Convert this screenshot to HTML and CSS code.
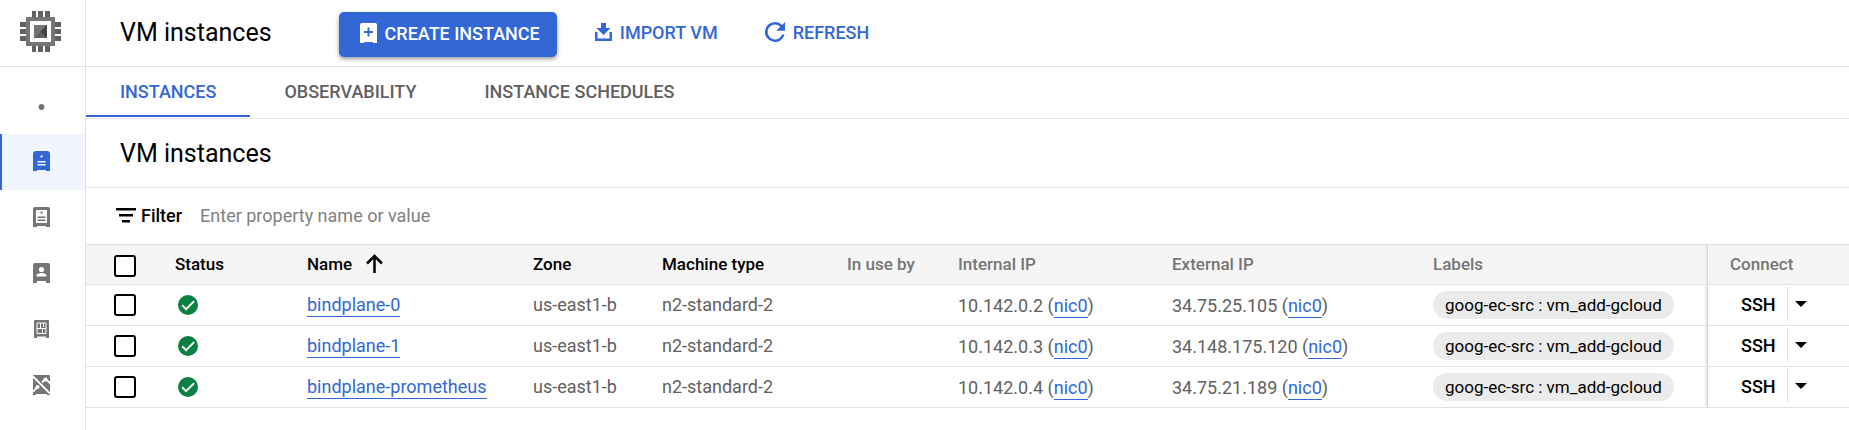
FILE: index.html
```html
<!DOCTYPE html>
<html lang="en">
<head>
    <meta charset="UTF-8">
    <meta name="viewport" content="width=device-width, initial-scale=1.0">
    <title>VM instances</title>
    <link rel="stylesheet" href="styles.css">
</head>
<body>

    <!-- Shared icons -->
    <svg class="sprite" aria-hidden="true">
        <symbol id="icon-check" viewBox="0 0 20 20">
            <circle cx="10" cy="10" r="10" fill="#0b8043"/>
            <path d="M4.2 10.2l3.900 3.900 8-8" fill="none" stroke="#fff" stroke-width="2"/>
        </symbol>
        <symbol id="icon-caret" viewBox="0 0 12 6">
            <path d="M0 0h12L6 6z" fill="#000"/>
        </symbol>
    </svg>

    <div class="layout">
        <!-- Side navigation -->
        <nav class="sidebar" aria-label="Compute Engine">
            <a href="#" class="logo" aria-label="Compute Engine">
                <svg width="41" height="41" viewBox="0 0 41 41">
                    <path fill="#616161" d="M12 0h4v6h-4zM18 0h5v6h-5zM25 0h5v6h-5zM12 35h4v6h-4zM18 35h5v6h-5zM25 35h5v6h-5zM0 11h6v5H0zM0 18h6v5H0zM0 25h6v5H0zM35 11h6v5h-6zM35 18h6v5h-6zM35 25h6v5h-6z"/>
                    <path fill="#757575" fill-rule="evenodd" d="M6 6h29v29H6zM10 10v21h21V10z"/>
                    <path fill="#757575" d="M14 14h13v13H14z"/>
                    <path fill="#616161" d="M14 27l13-13v13z"/>
                    <path fill="#424242" d="M27 14v13l-6.500-6.500z"/>
                </svg>
            </a>
            <div class="nav-list">
                <span class="nav-item">
                    <svg width="17" height="20" viewBox="0 0 17 20"><circle cx="8.500" cy="12" r="2.900" fill="#757575"/></svg>
                </span>
                <a href="#" class="nav-item active" aria-label="VM instances">
                    <svg width="17" height="20" viewBox="0 0 17 20">
                        <path fill="currentColor" d="M3 0h11q3 0 3 3v17h-4v-1H4v1H0V3q0-3 3-3z"/>
                        <path fill="#f0f5fe" d="M7.500 4.500h2v2h-2zM4.500 10h8v1.500h-8zM4.500 13h8v1.500h-8z"/>
                    </svg>
                </a>
                <a href="#" class="nav-item" aria-label="Instance templates">
                    <svg width="17" height="20" viewBox="0 0 17 20">
                        <path fill="currentColor" fill-rule="evenodd" d="M2 0h13q2 0 2 2v18h-4v-1H4v1H0V2q0-2 2-2zM3 3v13h11V3z"/>
                        <path fill="currentColor" d="M7.500 4.500h2v2h-2zM4.500 9.500h8V11h-8zM4.500 12.500h8V14h-8z"/>
                    </svg>
                </a>
                <a href="#" class="nav-item" aria-label="Sole-tenant nodes">
                    <svg width="17" height="20" viewBox="0 0 17 20">
                        <path fill="currentColor" d="M2 0h13q2 0 2 2v18h-4v-2H4v2H0V2q0-2 2-2z"/>
                        <circle cx="8.500" cy="6.500" r="2.600" fill="#fff"/>
                        <path fill="#fff" d="M3.500 13.500v-1c0-1.500 3-2.500 5-2.500s5 1 5 2.500v1z"/>
                    </svg>
                </a>
                <a href="#" class="nav-item" aria-label="Machine images">
                    <svg width="15" height="18" viewBox="0 0 15 18">
                        <path fill="currentColor" d="M1 0h13q1 0 1 1v17h-3v-1.500H3V18H0V1q0-1 1-1z"/>
                        <path fill="none" stroke="#fff" d="M3 3h9v10.500H3zM6.500 3v5.500M3 8.500h9M8.500 8.500v5M9.500 3v4"/>
                    </svg>
                </a>
                <a href="#" class="nav-item" aria-label="TPUs">
                    <svg width="17" height="20" viewBox="0 0 17 20">
                        <path fill="currentColor" d="M1 0h15q1 0 1 1v19h-3v-1H3v1H0V1q0-1 1-1z"/>
                        <path fill="none" stroke="#fff" stroke-width="1.800" d="M0 1.500l17 17M0 16.500l4.500-4.500M12.500 4L9 7.500M12.500 4l5 4.500"/>
                        <circle cx="4.500" cy="12" r="2" fill="#fff"/>
                        <circle cx="12.500" cy="4.500" r="2" fill="#fff"/>
                    </svg>
                </a>
            </div>
        </nav>

        <main class="content">
            <!-- Page header -->
            <header class="toolbar">
                <h1>VM instances</h1>
                <button type="button" class="btn primary">
                    <svg width="17" height="20" viewBox="0 0 17 20">
                        <path fill="#fff" d="M2 0h13q2 0 2 2v18h-4v-1H4v1H0V2q0-2 2-2z"/>
                        <path fill="#3367d6" d="M7.500 4.500h2v3.500H13v2H9.500v3.500h-2V10H4V8h3.500z"/>
                    </svg>
                    CREATE INSTANCE
                </button>
                <button type="button" class="btn">
                    <svg width="17" height="20" viewBox="0 0 17 20">
                        <path fill="currentColor" d="M6 1h5v5h4.500L8.500 13l-7-7H6zM0 10h2.500v6.500h12V10H17v9H0z"/>
                    </svg>
                    IMPORT VM
                </button>
                <button type="button" class="btn">
                    <svg width="20" height="20" viewBox="0 0 20 20">
                        <path fill="currentColor" d="M17.100 2.900L20 0v8.700h-8.700l3.900-3.900A7.300 7.300 0 0 0 10 2.600a7.400 7.400 0 1 0 7 9.900h2.600A10 10 0 1 1 10 0c2.800 0 5.200 1.100 7.100 2.900z"/>
                    </svg>
                    REFRESH
                </button>
            </header>

            <!-- Tabs -->
            <nav class="tabs">
                <a href="#" class="tab selected">INSTANCES</a>
                <a href="#" class="tab">OBSERVABILITY</a>
                <a href="#" class="tab">INSTANCE SCHEDULES</a>
            </nav>

            <h2>VM instances</h2>

            <!-- Filter -->
            <div class="filter">
                <svg width="20" height="15" viewBox="0 0 20 15">
                    <path fill="#000" d="M0 0h20v2.500H0zM3 6h14v2.500H3zM6 12h8v2.500H6z"/>
                </svg>
                <label for="filter">Filter</label>
                <input type="text" id="filter" placeholder="Enter property name or value">
            </div>

            <!-- Instances -->
            <table class="instances">
                <colgroup>
                    <col class="col-check">
                    <col class="col-status">
                    <col class="col-name">
                    <col class="col-zone">
                    <col class="col-machine">
                    <col class="col-use">
                    <col class="col-internal">
                    <col class="col-external">
                    <col class="col-labels">
                    <col class="col-connect">
                </colgroup>
                <thead>
                    <tr>
                        <th class="check"><input type="checkbox" aria-label="Select all"></th>
                        <th class="sortable">Status</th>
                        <th class="sortable">
                            <span class="sorted">Name
                                <svg width="17" height="19" viewBox="0 0 17 19">
                                    <path d="M8.500 19V2M1 9.500L8.500 2 16 9.500" fill="none" stroke="#000" stroke-width="2.500"/>
                                </svg>
                            </span>
                        </th>
                        <th class="sortable">Zone</th>
                        <th class="sortable">Machine type</th>
                        <th>In use by</th>
                        <th>Internal IP</th>
                        <th>External IP</th>
                        <th>Labels</th>
                        <th class="connect">Connect</th>
                    </tr>
                </thead>
                <tbody>
                    <tr>
                        <td class="check"><input type="checkbox" aria-label="Select bindplane-0"></td>
                        <td class="status"><svg width="20" height="20" role="img" aria-label="Running"><use href="#icon-check"/></svg></td>
                        <td><a href="#">bindplane-0</a></td>
                        <td>us-east1-b</td>
                        <td>n2-standard-2</td>
                        <td></td>
                        <td class="ip">10.142.0.2 (<a href="#">nic0</a>)</td>
                        <td class="ip">34.75.25.105 (<a href="#">nic0</a>)</td>
                        <td class="labels"><span class="chip">goog-ec-src : vm_add-gcloud</span></td>
                        <td class="connect">
                            <div class="ssh">
                                <button type="button">SSH</button>
                                <button type="button" class="more" aria-label="More SSH options"><svg width="12" height="6"><use href="#icon-caret"/></svg></button>
                            </div>
                        </td>
                    </tr>
                    <tr>
                        <td class="check"><input type="checkbox" aria-label="Select bindplane-1"></td>
                        <td class="status"><svg width="20" height="20" role="img" aria-label="Running"><use href="#icon-check"/></svg></td>
                        <td><a href="#">bindplane-1</a></td>
                        <td>us-east1-b</td>
                        <td>n2-standard-2</td>
                        <td></td>
                        <td class="ip">10.142.0.3 (<a href="#">nic0</a>)</td>
                        <td class="ip">34.148.175.120 (<a href="#">nic0</a>)</td>
                        <td class="labels"><span class="chip">goog-ec-src : vm_add-gcloud</span></td>
                        <td class="connect">
                            <div class="ssh">
                                <button type="button">SSH</button>
                                <button type="button" class="more" aria-label="More SSH options"><svg width="12" height="6"><use href="#icon-caret"/></svg></button>
                            </div>
                        </td>
                    </tr>
                    <tr>
                        <td class="check"><input type="checkbox" aria-label="Select bindplane-prometheus"></td>
                        <td class="status"><svg width="20" height="20" role="img" aria-label="Running"><use href="#icon-check"/></svg></td>
                        <td><a href="#">bindplane-prometheus</a></td>
                        <td>us-east1-b</td>
                        <td>n2-standard-2</td>
                        <td></td>
                        <td class="ip">10.142.0.4 (<a href="#">nic0</a>)</td>
                        <td class="ip">34.75.21.189 (<a href="#">nic0</a>)</td>
                        <td class="labels"><span class="chip">goog-ec-src : vm_add-gcloud</span></td>
                        <td class="connect">
                            <div class="ssh">
                                <button type="button">SSH</button>
                                <button type="button" class="more" aria-label="More SSH options"><svg width="12" height="6"><use href="#icon-caret"/></svg></button>
                            </div>
                        </td>
                    </tr>
                </tbody>
            </table>
        </main>
    </div>

</body>
</html>
```
FILE: styles.css
```css
* {
    box-sizing: border-box;
}
body {
    font-family: Roboto, Arial, sans-serif;
    font-size: 18px;
    color: #000;
    background-color: white;
    margin: 0;
}
svg {
    display: block;
    flex: none;
}
a {
    color: #3367d6;
    text-decoration: none;
}
button {
    font: inherit;
    font-weight: 500;
    background: none;
    border: none;
    padding: 0;
    cursor: pointer;
}
.sprite {
    position: absolute;
    width: 0;
    height: 0;
}
.layout {
    display: flex;
    min-height: 100vh;
}

/* Side navigation */
.sidebar {
    flex: none;
    width: 86px;
    border-right: 1px solid #e0e0e0;
}
.logo {
    display: flex;
    height: 67px;
    padding: 11px 20px;
    border-bottom: 1px solid #e0e0e0;
}
.nav-list {
    padding-top: 11px;
}
.nav-item {
    display: flex;
    align-items: center;
    justify-content: center;
    height: 56px;
    padding: 0 2px 2px 0;
    color: #757575;
}
.nav-item.active {
    color: #3367d6;
    background-color: #f0f5fe;
    box-shadow: inset 2px 0 #3367d6;
}

/* Page header */
.content {
    flex: 1;
    min-width: 0;
}
.toolbar {
    display: flex;
    align-items: center;
    height: 67px;
    padding: 0 0 2px 34px;
    border-bottom: 1px solid #e0e0e0;
}
h1, h2 {
    margin: 0;
    font-size: 25px;
    font-weight: 400;
}
h1 {
    margin-right: 67px;
}
h2 {
    display: flex;
    align-items: center;
    height: 69px;
    padding-left: 34px;
    border-bottom: 1px solid #e0e0e0;
}
.btn {
    display: flex;
    align-items: center;
    gap: 8px;
    color: #3367d6;
    margin-left: 47px;
}
.btn.primary {
    height: 45px;
    margin: 4px -9px 0 0;
    padding: 0 17px 2px 21px;
    color: white;
    background-color: #3367d6;
    border-radius: 5px;
    box-shadow: 0 2px 4px rgba(0, 0, 0, 0.4);
}

/* Tabs */
.tabs {
    display: flex;
    height: 52px;
    border-bottom: 1px solid #e0e0e0;
}
.tab {
    height: 50px;
    padding: 0 34px;
    line-height: 50px;
    font-weight: 500;
    color: #616161;
}
.tab.selected {
    color: #3367d6;
    box-shadow: inset 0 -2px #3367d6;
}

/* Filter */
.filter {
    display: flex;
    align-items: center;
    height: 57px;
    padding: 0 0 2px 30px;
    border-bottom: 1px solid #e0e0e0;
}
.filter label {
    margin: 0 18px 0 5px;
    font-weight: 500;
}
.filter input {
    flex: 1;
    padding: 0;
    font: inherit;
    border: none;
    outline: none;
}
.filter input::placeholder {
    color: #808080;
}

/* Instances table */
.instances {
    width: 100%;
    table-layout: fixed;
    border-collapse: separate;
    border-spacing: 0;
}
.col-check { width: 89px; }
.col-status { width: 132px; }
.col-name { width: 226px; }
.col-zone { width: 129px; }
.col-machine { width: 185px; }
.col-use { width: 111px; }
.col-internal { width: 214px; }
.col-external { width: 261px; }
.col-labels { width: 274px; }
.col-connect { width: 142px; }
th, td {
    padding: 0 0 2px;
    text-align: left;
    white-space: nowrap;
    border-bottom: 1px solid #e0e0e0;
}
th {
    height: 40px;
    font-size: 17px;
    font-weight: 500;
    color: #757575;
    background-color: #f5f5f5;
}
th.sortable {
    color: #000;
}
td {
    height: 41px;
    color: #616161;
}
td a {
    padding-bottom: 1px;
    border-bottom: 1px solid #3367d6;
}
td.ip, td.labels {
    padding-bottom: 0;
}
.sorted {
    display: flex;
    align-items: center;
    gap: 14px;
}
th.check, td.check {
    padding: 0 0 0 28px;
}
th.check {
    padding-top: 2px;
}
.check input {
    display: block;
    appearance: none;
    width: 22px;
    height: 22px;
    margin: 0;
    background-color: white;
    border: 2px solid #000;
    border-radius: 3px;
}
td.status {
    padding: 0 0 0 3px;
}
.chip {
    display: inline-block;
    height: 28px;
    padding: 0 12px;
    line-height: 28px;
    font-size: 17px;
    color: #000;
    background-color: #ebebeb;
    border-radius: 14px;
}
.connect {
    padding-left: 22px;
    border-left: 1px solid #d6d6d6;
    box-shadow: -2px 0 #ececec;
}
.ssh {
    display: flex;
    padding-left: 11px;
}
.ssh .more {
    height: 34px;
    margin-left: 11px;
    padding-left: 7px;
    border-left: 1px solid #e0e0e0;
}
```
